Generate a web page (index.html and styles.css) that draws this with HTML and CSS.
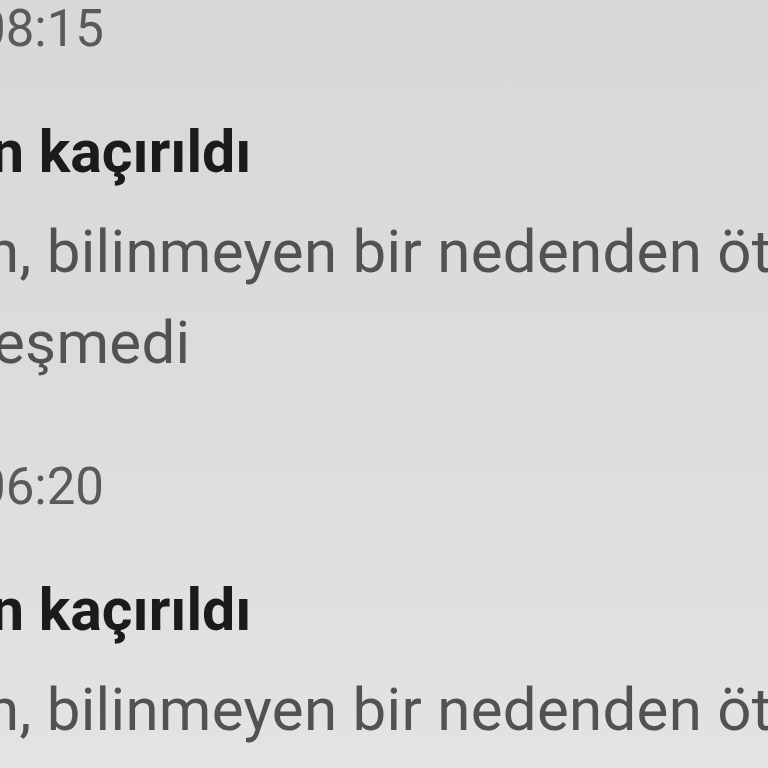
FILE: index.html
```html
<!DOCTYPE html>
<html lang="tr">
<head>
    <meta charset="UTF-8" />
    <meta name="viewport" content="width=device-width, initial-scale=1.0" />
    <title>Bildirimler</title>
    <link rel="stylesheet" href="styles.css">
</head>
<body>
    <div class="list">
        <div class="notice">
            <div class="time">08:15</div>
            <div class="title">n kaçırıldı</div>
            <div class="text first">n, bilinmeyen bir nedenden ötürü</div>
            <div class="text second">eşmedi</div>
        </div>

        <div class="notice">
            <div class="time">06:20</div>
            <div class="title">n kaçırıldı</div>
            <div class="text first">n, bilinmeyen bir nedenden ötürü</div>
            <div class="text second">eşmedi</div>
        </div>
    </div>
</body>
</html>
```

FILE: styles.css
```css
html, body {
    margin: 0;
    padding: 0;
    height: 100%;
    overflow: hidden;
}

body {
    font-family: Roboto, 'Noto Sans', sans-serif;
    background: linear-gradient(180deg, #d8d8d8 0%, #dcdcdc 50%, #e3e3e3 100%);
}

.list {
    display: flex;
    flex-direction: column;
    gap: 69px;
    margin-top: -1px;
    filter: blur(0.6px);
}

.notice {
    display: flex;
    flex-direction: column;
}

.time,
.title,
.text {
    white-space: nowrap;
    overflow: hidden;
}

.time {
    font-size: 51px;
    line-height: 60px;
    color: #5a5a5a;
    text-indent: -23px;
}

.title {
    margin-top: 47px;
    font-size: 59px;
    line-height: 91px;
    font-weight: 700;
    color: #1b1b1b;
    text-indent: -9px;
}

.text {
    font-size: 60px;
    line-height: 91px;
    color: #525252;
    letter-spacing: 0.3px;
}

.text.first {
    margin-top: 9px;
    text-indent: -14px;
}

.text.second {
    text-indent: -7px;
}
```
